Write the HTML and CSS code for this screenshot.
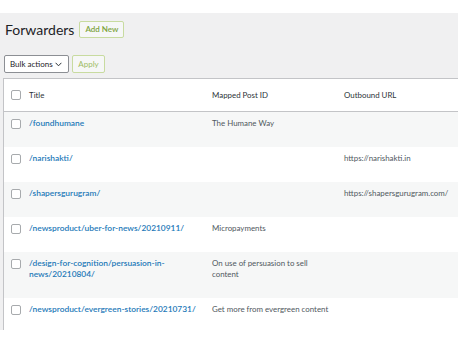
FILE: index.html
```html
<!DOCTYPE html>
<html lang="en">
<head>
    <meta charset="UTF-8">
    <meta name="viewport" content="width=device-width, initial-scale=1.0">
    <title>Forwarders</title>
    <link rel="stylesheet" href="styles.css">
</head>
<body>

    <div class="admin-screen">

        <!-- page heading -->
        <div class="page-head">
            <h1 class="page-title">Forwarders</h1>
            <a class="page-title-action" href="#">Add New</a>
        </div>

        <!-- bulk actions -->
        <div class="tablenav">
            <div class="bulk-select">
                <span>Bulk actions</span>
                <svg class="chevron" width="7" height="5" viewBox="0 0 7 5"><path d="M0.6 0.8 L3.5 3.8 L6.4 0.8" fill="none" stroke="#2c3338" stroke-width="1"/></svg>
            </div>
            <button class="button-apply">Apply</button>
        </div>

        <table class="list-table">
            <thead>
                <tr>
                    <th class="check-col"><span class="checkbox"></span></th>
                    <th class="title-col">Title</th>
                    <th class="mapped-col">Mapped Post ID</th>
                    <th class="url-col">Outbound URL</th>
                </tr>
            </thead>
            <tbody>
                <tr>
                    <td class="check-col"><span class="checkbox"></span></td>
                    <td class="title-col"><a class="row-title" href="#">/foundhumane</a><div class="row-actions"></div></td>
                    <td>The Humane Way</td>
                    <td></td>
                </tr>
                <tr>
                    <td class="check-col"><span class="checkbox"></span></td>
                    <td class="title-col"><a class="row-title" href="#">/narishakti/</a><div class="row-actions"></div></td>
                    <td></td>
                    <td>https://narishakti.in</td>
                </tr>
                <tr>
                    <td class="check-col"><span class="checkbox"></span></td>
                    <td class="title-col"><a class="row-title" href="#">/shapersgurugram/</a><div class="row-actions"></div></td>
                    <td></td>
                    <td>https://shapersgurugram.com/</td>
                </tr>
                <tr>
                    <td class="check-col"><span class="checkbox"></span></td>
                    <td class="title-col"><a class="row-title" href="#">/newsproduct/uber-for-news/20210911/</a><div class="row-actions"></div></td>
                    <td>Micropayments</td>
                    <td></td>
                </tr>
                <tr>
                    <td class="check-col"><span class="checkbox"></span></td>
                    <td class="title-col"><a class="row-title" href="#">/design-for-cognition/persuasion-in-news/20210804/</a><div class="row-actions"></div></td>
                    <td>On use of persuasion to sell content</td>
                    <td></td>
                </tr>
                <tr>
                    <td class="check-col"><span class="checkbox"></span></td>
                    <td class="title-col"><a class="row-title" href="#">/newsproduct/evergreen-stories/20210731/</a><div class="row-actions"></div></td>
                    <td>Get more from evergreen content</td>
                    <td></td>
                </tr>
            </tbody>
        </table>

    </div>

</body>
</html>
```

FILE: styles.css
```css
:root {
    --screen-bg: #f0f0f1;
    --stripe-bg: #f6f7f7;
    --border: #c3c4c7;
    --text-main: #50575e;
    --text-dark: #1d2327;
    --link: #2479b8;
    --accent-green: #7da33c;
    --accent-green-border: #c8dba0;
    --font-family: "Segoe UI", Lato, "Noto Sans", sans-serif;
}

body {
    margin: 0;
    background: #fff;
    font-family: var(--font-family);
    color: var(--text-main);
    overflow: hidden;
}

.admin-screen {
    margin-top: 13px;
    height: 317px;
    background: var(--screen-bg);
    padding-left: 3px;
    overflow: hidden;
}

/* heading */
.page-head {
    display: flex;
    align-items: center;
    gap: 5px;
    padding-top: 8px;
    margin-left: 2px;
}

.page-title {
    margin: 0;
    font-size: 14px;
    font-weight: 400;
    line-height: 17px;
    color: var(--text-dark);
}

.page-title-action {
    display: inline-block;
    height: 15px;
    line-height: 15px;
    padding: 0 5px;
    border: 1px solid var(--accent-green-border);
    border-radius: 2px;
    background: var(--stripe-bg);
    color: var(--accent-green);
    font-size: 8px;
    font-weight: 600;
    text-decoration: none;
}

/* bulk actions */
.tablenav {
    display: flex;
    gap: 3px;
    margin-top: 17px;
    margin-left: 1px;
}

.bulk-select {
    display: flex;
    align-items: center;
    justify-content: space-between;
    box-sizing: border-box;
    width: 65px;
    height: 18px;
    padding: 0 6px 0 5px;
    border: 1px solid #8c8f94;
    border-radius: 2px;
    background: #fff;
    color: var(--text-dark);
    font-size: 8px;
}

.button-apply {
    box-sizing: border-box;
    height: 18px;
    width: 33px;
    padding: 0;
    border: 1px solid var(--accent-green-border);
    border-radius: 2px;
    background: var(--stripe-bg);
    color: #9dbb65;
    font-family: var(--font-family);
    font-size: 8px;
}

/* table */
.list-table {
    margin-top: 5px;
    width: 480px;
    border-collapse: collapse;
    border: 1px solid var(--border);
    border-right: 0;
    border-bottom: 0;
    background: #fff;
    table-layout: fixed;
    font-size: 7.9px;
}

.list-table th {
    height: 32px;
    padding: 0 5px;
    text-align: left;
    font-weight: 400;
    color: #2c3338;
    border-bottom: 1px solid var(--border);
    vertical-align: middle;
}

.list-table td {
    padding: 6px 5px 6px 5px;
    line-height: 11px;
    vertical-align: top;
}

.list-table tbody tr:nth-child(odd) {
    background: var(--stripe-bg);
}

.list-table td.check-col,
.list-table th.check-col {
    padding: 0 0 0 7px;
    width: 13px;
}

.list-table td.check-col .checkbox {
    margin-top: 7px;
}

.title-col {
    width: 173px;
}

.mapped-col {
    width: 122px;
}

.checkbox {
    display: block;
    box-sizing: border-box;
    width: 10px;
    height: 10px;
    border: 1px solid #a7aaad;
    border-radius: 2px;
    background: #fff;
}

.row-title {
    color: var(--link);
    font-size: 8.4px;
    font-weight: 600;
    text-decoration: none;
}

.row-actions {
    height: 12px;
}
```
